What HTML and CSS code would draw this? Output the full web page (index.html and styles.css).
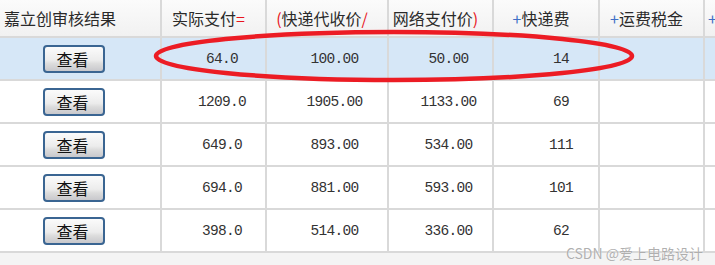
FILE: index.html
```html
<!DOCTYPE html>
<html lang="zh">
<head>
<meta charset="utf-8">
<link rel="stylesheet" href="styles.css">
</head>
<body>
<div class="page">
  <div class="grid">
    <div class="cell head">嘉立创审核结果</div>
    <div class="cell head c">实际支付<span class="red">=</span></div>
    <div class="cell head c"><span class="red">(</span>快递代收价<span class="red">/</span></div>
    <div class="cell head c">网络支付价<span class="red">)</span></div>
    <div class="cell head c"><span class="blue">+</span>快递费</div>
    <div class="cell head c"><span class="blue">+</span>运费税金</div>
    <div class="cell head last"><span class="blue">+</span></div>

    <div class="cell sel btncell"><span class="btn">查看</span></div>
    <div class="cell sel num n2">64.0</div>
    <div class="cell sel num n3">100.00</div>
    <div class="cell sel num n4">50.00</div>
    <div class="cell sel num n5">14</div>
    <div class="cell sel"></div>
    <div class="cell sel"></div>

    <div class="cell btncell"><span class="btn">查看</span></div>
    <div class="cell num n2">1209.0</div>
    <div class="cell num n3">1905.00</div>
    <div class="cell num n4">1133.00</div>
    <div class="cell num n5">69</div>
    <div class="cell"></div>
    <div class="cell"></div>

    <div class="cell btncell"><span class="btn">查看</span></div>
    <div class="cell num n2">649.0</div>
    <div class="cell num n3">893.00</div>
    <div class="cell num n4">534.00</div>
    <div class="cell num n5">111</div>
    <div class="cell"></div>
    <div class="cell"></div>

    <div class="cell btncell"><span class="btn">查看</span></div>
    <div class="cell num n2">694.0</div>
    <div class="cell num n3">881.00</div>
    <div class="cell num n4">593.00</div>
    <div class="cell num n5">101</div>
    <div class="cell"></div>
    <div class="cell"></div>

    <div class="cell btncell"><span class="btn">查看</span></div>
    <div class="cell num n2">398.0</div>
    <div class="cell num n3">514.00</div>
    <div class="cell num n4">336.00</div>
    <div class="cell num n5">62</div>
    <div class="cell"></div>
    <div class="cell"></div>
  </div>
  <svg class="mark" width="715" height="100" viewBox="0 0 715 100">
    <ellipse cx="394" cy="56" rx="238" ry="24" fill="none" stroke="#ec1c24" stroke-width="4.5"/>
  </svg>
  <div class="watermark">CSDN @爱上电路设计</div>
</div>
</body>
</html>
```

FILE: styles.css
```css
html, body {
  margin: 0;
  padding: 0;
  background: #f4f4f4;
}
.page {
  position: relative;
  width: 715px;
  height: 265px;
  overflow: hidden;
  font-family: "Noto Sans CJK SC", "Liberation Sans", sans-serif;
}
.grid {
  display: grid;
  grid-template-columns: 160px 103px 120px 103px 104px 103px 20px;
  grid-template-rows: 36px repeat(5, 41px);
  gap: 2px;
  background: #d9d9d9;
  border-bottom: 2px solid #d9d9d9;
  width: 733px;
}
.cell {
  background: #ffffff;
  display: flex;
  align-items: center;
  color: #333;
  white-space: nowrap;
}
.head {
  background: linear-gradient(#fbfbfb, #f1f1f1);
  font-size: 16px;
  color: #2a2a2a;
  padding-left: 4px;
  overflow: visible;
}
.head.c {
  justify-content: center;
  padding-left: 0;
  padding-right: 10px;
}
.head.last {
  padding-left: 3px;
}
.red { color: #e8141c; }
.blue { color: #3f6fc6; }
.sel { background: #d6e7f7; }
.btncell {
  justify-content: center;
  padding-right: 13px;
}
.btn {
  box-sizing: border-box;
  width: 62px;
  height: 28px;
  border: 2px solid #3a6592;
  border-radius: 4px;
  background: linear-gradient(#fbfbfb 0%, #ececec 55%, #dcdcdc 70%, #c8c8cc 100%);
  display: flex;
  align-items: center;
  justify-content: center;
  font-size: 16px;
  color: #111;
  padding-right: 2px;
}
.num {
  justify-content: center;
  font-family: "Liberation Mono", "DejaVu Sans Mono", monospace;
  font-size: 14.5px;
  letter-spacing: -0.7px;
  color: #333;
}
.n2 { padding-left: 17px; }
.n3 { padding-left: 15px; }
.n4 { padding-left: 16px; }
.n5 { padding-left: 30px; }
.mark {
  position: absolute;
  left: 0;
  top: 0;
}
.watermark {
  position: absolute;
  right: 12px;
  top: 243px;
  font-size: 14px;
  color: rgba(150, 150, 150, 0.75);
  text-shadow: 0 0 1px #fff;
}
```
